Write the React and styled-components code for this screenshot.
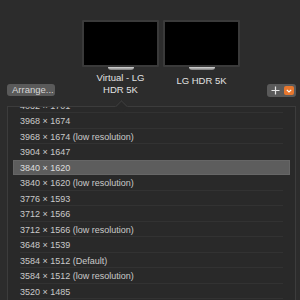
import React from "react";
import styled, { createGlobalStyle } from "styled-components";

const GlobalStyle = createGlobalStyle`
    * { box-sizing: border-box; margin: 0; padding: 0; }
    html, body { width: 300px; height: 300px; overflow: hidden; background: #2b2b2b; }
    body { font-family: "Liberation Sans", Arial, sans-serif; -webkit-font-smoothing: antialiased; }
`;

const Window = styled.div`
    width: 300px;
    height: 300px;
    display: flex;
    flex-direction: column;
    background: #2c2c2c;
    overflow: hidden;
`;

const Header = styled.div`
    height: 106px;
    flex-shrink: 0;
    display: flex;
    align-items: flex-start;
    padding: 20px 4px 0 7px;
`;

const SmallButton = styled.button`
    align-self: flex-end;
    margin-bottom: 10px;
    height: 12px;
    border: none;
    border-radius: 3px;
    background: #5a5a5a;
    color: #d6d6d6;
    font-family: inherit;
    font-size: 9.5px;
    line-height: 12px;
    padding: 0 0 0 5px;
    width: 48px;
    text-align: left;
    white-space: nowrap;
`;

const Displays = styled.div`
    display: flex;
    gap: 4px;
    margin-left: 27px;
`;

const Display = styled.div`
    width: 77px;
    display: flex;
    flex-direction: column;
    align-items: center;
`;

const Screen = styled.div`
    width: 77px;
    height: 47px;
    background: #000;
    border: 2px solid #3a3a3a;
    border-radius: 1px;
`;

const Stand = styled.div`
    width: 26px;
    height: 3px;
    border-radius: 0 0 3px 3px;
    background: linear-gradient(#d8d8d8, #7a7a7a);
`;

const Label = styled.div`
    margin-top: ${p => p.$offset}px;
    color: #e2e2e2;
    font-size: 9.5px;
    line-height: 12px;
    text-align: center;
`;

const AddGroup = styled.div`
    margin-left: auto;
    align-self: flex-end;
    margin-bottom: 9px;
    width: 29px;
    height: 13px;
    border-radius: 3px;
    background: #5a5a5a;
    display: flex;
    align-items: center;
    justify-content: space-between;
    padding: 0 2px 0 4px;
`;

const Orange = styled.div`
    width: 10px;
    height: 9px;
    border-radius: 2px;
    background: #e8772e;
    display: flex;
    align-items: center;
    justify-content: center;
`;

const Popover = styled.div`
    position: relative;
    flex: 1;
    margin: 0 4px 0 7px;
    border: 1px solid #3c3c3c;
    border-bottom: none;
    background: #292929;
    padding: 0 5px;
`;

const Arrow = styled.div`
    position: absolute;
    top: -5px;
    left: 109px;
    width: 9px;
    height: 9px;
    transform: rotate(45deg);
    background: #292929;
    border-left: 1px solid #3c3c3c;
    border-top: 1px solid #3c3c3c;
`;

const List = styled.div`
    height: 100%;
    overflow: hidden;
    position: relative;
`;

const Rows = styled.div`
    margin-top: -9.25px;
    display: flex;
    flex-direction: column;
`;

const Row = styled.div`
    height: 15.5px;
    display: flex;
    align-items: center;
    padding-left: 7px;
    font-size: 9px;
    color: ${p => (p.$selected ? "#dedede" : "#cacaca")};
    background: ${p => (p.$selected ? "#5d5d5d" : "transparent")};
    box-shadow: ${p => (p.$selected ? "inset 0 0 0 1px #666" : "none")};
    position: relative;
    white-space: nowrap;
    &::after {
        content: "";
        position: absolute;
        left: 7px;
        right: 7px;
        bottom: 0;
        height: 1px;
        background: ${p => (p.$selected || p.$beforeSelected ? "transparent" : "#323232")};
    }
`;

const modes = [
    "4032 × 1701",
    "3968 × 1674",
    "3968 × 1674 (low resolution)",
    "3904 × 1647",
    "3840 × 1620",
    "3840 × 1620 (low resolution)",
    "3776 × 1593",
    "3712 × 1566",
    "3712 × 1566 (low resolution)",
    "3648 × 1539",
    "3584 × 1512 (Default)",
    "3584 × 1512 (low resolution)",
    "3520 × 1485",
    "3456 × 1458",
];

const selected = 4;

export default function App() {
    return <>
        <GlobalStyle />
        <Window>
            <Header>
                <SmallButton>Arrange...</SmallButton>
                <Displays>
                    <Display>
                        <Screen />
                        <Stand />
                        <Label $offset={2}>Virtual - LG<br />HDR 5K</Label>
                    </Display>
                    <Display>
                        <Screen />
                        <Stand />
                        <Label $offset={5}>LG HDR 5K</Label>
                    </Display>
                </Displays>
                <AddGroup>
                    <svg width="9" height="9" viewBox="0 0 9 9">
                        <path d="M4.5 0.5v8M0.5 4.5h8" stroke="#e6e6e6" strokeWidth="1.2" />
                    </svg>
                    <Orange>
                        <svg width="6" height="4" viewBox="0 0 6 4">
                            <path d="M0.8 0.8L3 3L5.2 0.8" stroke="#fff" strokeWidth="1.2" fill="none" />
                        </svg>
                    </Orange>
                </AddGroup>
            </Header>
            <Popover>
                <Arrow />
                <List>
                    <Rows>
                        {modes.map((m, i) => (
                            <Row key={m} $selected={i === selected} $beforeSelected={i === selected - 1}>{m}</Row>
                        ))}
                    </Rows>
                </List>
            </Popover>
        </Window>
    </>;
}
